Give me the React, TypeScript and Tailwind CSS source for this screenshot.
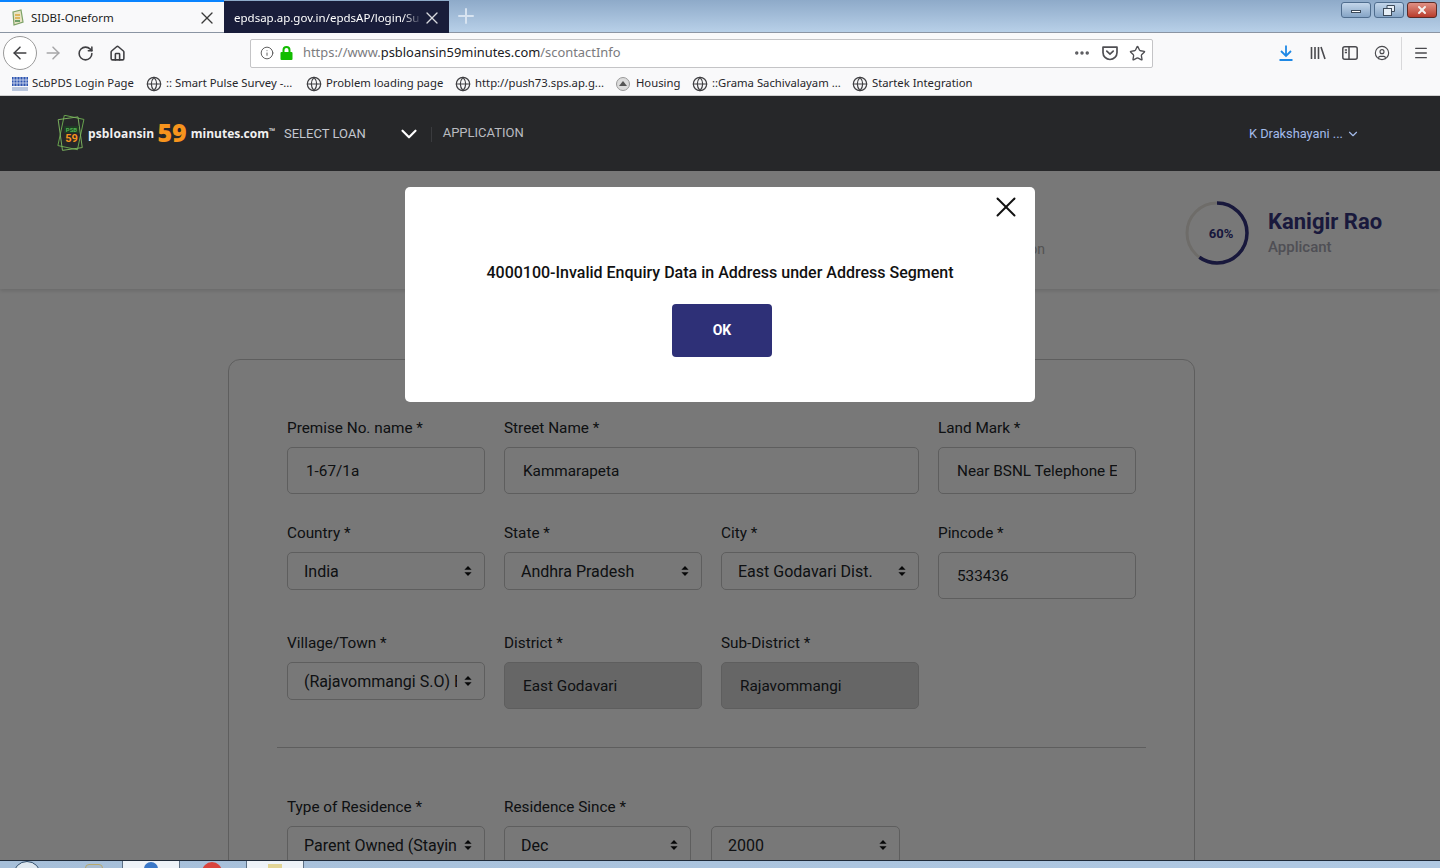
import { ArrowLeft, ArrowRight, ChevronDown, CircleUser, Ellipsis, Globe, Home, Info, Menu, Plus, RotateCw, Star, X } from "lucide-react";

const bookmarks = [
  { label: ":: Smart Pulse Survey -...", width: "w-[160px]" },
  { label: "Problem loading page", width: "w-[149px]" },
  { label: "http://push73.sps.ap.g...", width: "w-[161px]" },
];

function Caret() {
  return (
    <svg className="pointer-events-none absolute right-[13px] top-1/2 -translate-y-1/2" width="8" height="11" viewBox="0 0 8 11" aria-hidden="true">
      <path d="M4 0.5 L7.6 4.3 H0.4 Z M4 10.5 L0.4 6.7 H7.6 Z" fill="#101113" />
    </svg>
  );
}

function Label({ children }: { children: string }) {
  return <label className="mb-[9px] block h-[21px] pt-px text-[15.3px] leading-5 text-[#212529]">{children}</label>;
}

function TextField({ label, value, disabled }: { label: string; value: string; disabled?: boolean }) {
  return (
    <div>
      <Label>{label}</Label>
      <input
        readOnly
        value={value}
        className={`h-[47px] w-full rounded-[5px] border border-[#c8c8c8] px-[18px] text-[15.3px] text-[#212529] outline-none ${disabled ? "bg-[#d9d9d9]" : "bg-white"}`}
      />
    </div>
  );
}

function SelectBox({ value, className }: { value: string; className?: string }) {
  return (
    <div className={`relative ${className ?? ""}`}>
      <select
        value={value}
        onChange={() => undefined}
        className="h-[38px] w-full appearance-none rounded-[5px] border border-[#c8c8c8] bg-white pl-4 pr-[27px] pt-[2px] text-[16px] text-[#212529] outline-none"
      >
        <option>{value}</option>
      </select>
      <Caret />
    </div>
  );
}

function SelectField({ label, value }: { label: string; value: string }) {
  return (
    <div>
      <Label>{label}</Label>
      <SelectBox value={value} />
    </div>
  );
}

function BrowserTabs() {
  return (
    <div className="flex h-[33px] items-start border-b border-[#8b95a3] bg-gradient-to-b from-[#8eaac9] to-[#b8d0e8]">
      <div className="flex h-[32px] w-[224px] items-center border-t-[2px] border-[#0a84ff] bg-[#f9f9fa] pl-[10px] pr-[7px] pt-px">
        <svg width="15" height="17" viewBox="0 0 15 17" aria-hidden="true">
          <path d="M3 3 L11 1 L13 13 L4 16 Z" fill="#e8e4c4" stroke="#7da267" strokeWidth="1.2" />
          <path d="M5 6 H10 M5 9 H10" stroke="#d9a53d" strokeWidth="1.6" />
          <path d="M5 12 H10" stroke="#4d8c52" strokeWidth="1.6" />
        </svg>
        <span className="ml-[6px] flex-1 text-[11.5px] text-[#1c1c1c]">SIDBI-Oneform</span>
        <X size={20} strokeWidth={1.6} className="text-[#3a3a3a]" />
      </div>
      <div className="mt-px flex h-[32px] w-[225px] items-center bg-[#191d3a] pl-[10px] pr-[7px] pt-px text-white">
        <span className="flex-1 whitespace-nowrap text-[11.5px] [mask-image:linear-gradient(to_right,black_90%,transparent_100%)]">
          epdsap.ap.gov.in/epdsAP/login/Su
        </span>
        <X size={20} strokeWidth={1.6} className="shrink-0 text-[#d8d9de]" />
      </div>
      <Plus size={24} strokeWidth={2} className="ml-[5px] mt-[4px] text-[#d7e3f0]" />
      <div className="ml-auto mr-[3px] mt-[2px] flex gap-[3px]">
        <div className="flex h-[16px] w-[30px] items-center justify-center rounded-[3px] border border-[#4f6d8e] bg-gradient-to-b from-[#c3d6ea] to-[#86a5c6]">
          <div className="mt-[3px] h-[3px] w-[10px] border border-[#3c4a5a] bg-white" />
        </div>
        <div className="flex h-[16px] w-[30px] items-center justify-center rounded-[3px] border border-[#4f6d8e] bg-gradient-to-b from-[#c3d6ea] to-[#86a5c6]">
          <svg width="12" height="11" viewBox="0 0 12 11" aria-hidden="true">
            <path d="M4 0.5 H11.5 V6.5 H8.5 V3.5 H4 Z" fill="#e6eef6" stroke="#3c4a5a" />
            <rect x="0.5" y="3.5" width="8" height="7" fill="#e6eef6" stroke="#3c4a5a" />
          </svg>
        </div>
        <div className="flex h-[16px] w-[30px] items-center justify-center rounded-[3px] border border-[#5c2a26] bg-gradient-to-b from-[#df9084] to-[#b83b2c]">
          <X size={12} strokeWidth={4} className="text-[#f4f1ef]" />
        </div>
      </div>
    </div>
  );
}

function BrowserToolbar() {
  return (
    <div className="flex h-[38px] items-center bg-[#f9f9fa] pl-[3px] pt-[2px] text-[#3f3f42]">
      <div className="flex size-[34px] items-center justify-center rounded-full border border-[#9a9a9a] bg-white">
        <ArrowLeft size={20} strokeWidth={1.8} />
      </div>
      <ArrowRight size={20} strokeWidth={1.8} className="ml-[6px] text-[#a6a6a8]" />
      <RotateCw size={17} strokeWidth={2.2} className="ml-[14px]" />
      <Home size={17} strokeWidth={2.2} className="ml-[15px]" />
      <div className="ml-[124px] flex h-[29px] w-[903px] items-center rounded-[2px] border border-[#c4c4c6] bg-white pl-[9px] pr-[6px]">
        <Info size={14} strokeWidth={1.6} className="text-[#555]" />
        <svg className="ml-[6px]" width="13" height="14" viewBox="0 0 13 14" aria-hidden="true">
          <path d="M3.5 6 V4 A3 3 0 0 1 9.5 4 V6" fill="none" stroke="#12bc00" strokeWidth="2" />
          <rect x="0.5" y="6" width="12" height="8" rx="1" fill="#12bc00" />
        </svg>
        <span className="ml-[10px] flex-1 text-[12.9px] text-[#7b7b7e]">
          https://www.<span className="text-[#202023]">psbloansin59minutes.com</span>/scontactInfo
        </span>
        <Ellipsis size={18} strokeWidth={2.6} className="mr-px text-[#58585c]" />
        <svg className="ml-[10px]" width="16" height="15" viewBox="0 0 16 15" fill="none" stroke="#4f4f53" strokeWidth="1.7" aria-hidden="true">
          <path d="M1 1.2 H15 V6.5 A7 7 0 0 1 1 6.5 Z" strokeLinejoin="round" />
          <path d="M4.8 5.2 L8 8.2 L11.2 5.2" strokeLinecap="round" />
        </svg>
        <Star size={17} strokeWidth={1.9} className="ml-[11px] text-[#4f4f53]" />
      </div>
      <svg className="ml-[126px]" width="14" height="16" viewBox="0 0 14 16" fill="none" stroke="#1e88e5" strokeWidth="1.8" aria-hidden="true">
        <path d="M7 0.5 V10.5 M2 6 L7 11 L12 6 M0.5 15 H13.5" />
      </svg>
      <svg className="ml-[17px]" width="16" height="14" viewBox="0 0 16 14" fill="none" stroke="#4a4a4e" strokeWidth="1.6" aria-hidden="true">
        <path d="M1.5 1 V13 M5 1 V13 M8.5 1 V13 M11 1 L15 13" />
      </svg>
      <svg className="ml-[16px]" width="16" height="14" viewBox="0 0 16 14" fill="none" stroke="#4a4a4e" strokeWidth="1.5" aria-hidden="true">
        <rect x="0.8" y="0.8" width="14.4" height="12.4" rx="2" />
        <path d="M7 1 V13 M2.8 4 H5 M2.8 6.5 H5" />
      </svg>
      <CircleUser size={16} strokeWidth={1.7} className="ml-[16px] text-[#4a4a4e]" />
      <div className="ml-[11px] h-[33px] w-px bg-[#d8d8da]" />
      <Menu size={16} strokeWidth={2} className="ml-[11px] text-[#4a4a4e]" />
    </div>
  );
}

function BrowserBookmarks() {
  return (
    <div className="flex h-[25px] items-center border-b border-[#d0d0d0] bg-[#f9f9fa] pl-[12px] pt-px text-[11.3px] text-[#26262a]">
      <svg width="16" height="16" viewBox="0 0 16 16" aria-hidden="true">
        <rect y="1" width="16" height="9" fill="#2f55b0" />
        <path d="M2 1 V10 M5 1 V10 M8 1 V10 M11 1 V10 M14 1 V10 M0 4 H16 M0 7 H16" stroke="#dfe6f5" strokeWidth="0.8" />
        <rect y="11" width="16" height="4" fill="#b9c6dd" />
      </svg>
      <span className="ml-[4px] w-[114px]">ScbPDS Login Page</span>
      {bookmarks.map((b) => (
        <div key={b.label} className={`flex items-center ${b.width}`}>
          <Globe size={16} strokeWidth={1.8} className="shrink-0 text-[#3f3f42]" />
          <span className="ml-[4px] whitespace-nowrap">{b.label}</span>
        </div>
      ))}
      <div className="flex w-[76px] items-center">
        <div className="flex size-[14px] shrink-0 items-center justify-center rounded-full border border-[#9a9a9a] bg-[#dcdcdc]">
          <div className="size-0 border-x-[4px] border-b-[5px] border-x-transparent border-b-[#555]" />
        </div>
        <span className="ml-[6px]">Housing</span>
      </div>
      <div className="flex w-[160px] items-center">
        <Globe size={16} strokeWidth={1.8} className="shrink-0 text-[#3f3f42]" />
        <span className="ml-[4px] whitespace-nowrap">::Grama Sachivalayam ...</span>
      </div>
      <div className="flex items-center">
        <Globe size={16} strokeWidth={1.8} className="shrink-0 text-[#3f3f42]" />
        <span className="ml-[4px] whitespace-nowrap">Startek Integration</span>
      </div>
    </div>
  );
}

function AppHeader() {
  return (
    <header className="relative z-10 flex h-[75px] shrink-0 items-center bg-[#262729] pl-[56px] pt-px font-['Roboto',sans-serif]">
      <svg width="30" height="36" viewBox="0 0 30 36" className="-mt-[2px]" aria-hidden="true">
        <rect x="5" y="2" width="20" height="31" fill="none" stroke="#6aa84f" strokeWidth="0.9" transform="rotate(12 15 17)" />
        <rect x="4" y="3" width="20" height="31" fill="none" stroke="#7db35f" strokeWidth="0.9" transform="rotate(-8 15 17)" />
        <rect x="8" y="11" width="15" height="7" fill="#1f3b24" />
        <text x="15.5" y="17" textAnchor="middle" fontSize="6" fontWeight="700" fill="#4fb34f">PSB</text>
        <text x="15.5" y="27" textAnchor="middle" fontSize="11" fontWeight="700" fill="#f7941d">59</text>
      </svg>
      <div className="ml-[2px] flex w-[196px] items-center whitespace-nowrap font-['Open_Sans',sans-serif] font-bold text-[#f1f1f1]">
        <span className="text-[12px] tracking-[0.15px]">psbloansin</span>
        <span className="ml-[3px] -mt-[3px] text-[25px] font-extrabold leading-none text-[#f7941d]">59</span>
        <span className="ml-[4px] text-[12px]">minutes.com</span>
        <span className="-mt-[6px] text-[8px]">™</span>
      </div>
      <span className="text-[13px] text-[#c4c7cf]">SELECT LOAN</span>
      <ChevronDown size={26} strokeWidth={2} className="ml-[30px] text-white" />
      <div className="ml-[9px] h-[15px] w-px bg-[#3a3b3e]" />
      <span className="-mt-[2px] ml-[11px] text-[13px] text-[#b9bbc0]">APPLICATION</span>
      <span className="ml-auto text-[12.8px] text-[#a3bbea]">K Drakshayani ...</span>
      <ChevronDown size={14} strokeWidth={2} className="ml-[3px] mr-[80px] text-[#a3bbea]" />
    </header>
  );
}

function ProfileBar() {
  return (
    <div className="flex h-[118px] items-center bg-white pr-[58px] pt-[5px] shadow-[0_2px_4px_rgba(0,0,0,0.12)]">
      <span className="ml-auto mt-[33px] text-[14px] text-[#b0b0b0]">Application</span>
      <div className="relative ml-[140px] size-[64px]">
        <svg width="64" height="64" viewBox="0 0 64 64" aria-hidden="true">
          <circle cx="32" cy="32" r="30" fill="none" stroke="#e9e6df" strokeWidth="3" />
          <circle cx="32" cy="32" r="30" fill="none" stroke="#33337f" strokeWidth="3.5" pathLength="100" strokeDasharray="60 40" transform="rotate(-90 32 32)" />
        </svg>
        <span className="absolute inset-0 flex items-center justify-center pl-[8px] pt-[3px] text-[13px] font-bold text-[#33337f]">60%</span>
      </div>
      <div className="ml-[19px] w-[114px]">
        <div className="whitespace-nowrap text-[22px] font-bold leading-[28px] text-[#36367f]">Kanigir Rao</div>
        <div className="mt-[1px] text-[15px] font-medium leading-5 text-[#a8a8b4]">Applicant</div>
      </div>
    </div>
  );
}

function AddressForm() {
  return (
    <div className="ml-[228px] mt-[70px] h-[640px] w-[967px] rounded-[12px] border border-[#c8c8c8] pl-[58px] pt-[57px]">
      <div className="mb-[28px] grid w-[849px] grid-cols-4 gap-x-[19px]">
        <TextField label="Premise No. name *" value="1-67/1a" />
        <div className="col-span-2">
          <TextField label="Street Name *" value="Kammarapeta" />
        </div>
        <TextField label="Land Mark *" value="Near BSNL Telephone Exchange" />
      </div>
      <div className="mb-[33px] grid w-[849px] grid-cols-4 items-start gap-x-[19px]">
        <SelectField label="Country *" value="India" />
        <SelectField label="State *" value="Andhra Pradesh" />
        <SelectField label="City *" value="East Godavari Dist." />
        <TextField label="Pincode *" value="533436" />
      </div>
      <div className="grid w-[849px] grid-cols-4 items-start gap-x-[19px]">
        <SelectField label="Village/Town *" value="(Rajavommangi S.O) East" />
        <TextField label="District *" value="East Godavari" disabled />
        <TextField label="Sub-District *" value="Rajavommangi" disabled />
      </div>
      <hr className="-ml-[10px] mb-[48px] mt-[38px] w-[869px] border-[#c8c8c8]" />
      <div className="flex">
        <div className="w-[198px]">
          <SelectField label="Type of Residence *" value="Parent Owned (Staying with parents)" />
        </div>
        <div className="ml-[19px] w-[187px]">
          <SelectField label="Residence Since *" value="Dec" />
        </div>
        <div className="ml-[20px] w-[189px] pt-[30px]">
          <SelectBox value="2000" />
        </div>
      </div>
    </div>
  );
}

function ErrorModal() {
  return (
    <>
      <div className="absolute inset-0 bg-black/[0.53]" />
      <div className="absolute left-[405px] top-[16px] h-[215px] w-[630px] rounded-[5px] bg-white pt-[3px]">
        <div className="flex justify-end pr-[12px]">
          <X size={34} strokeWidth={1.4} className="text-[#111]" />
        </div>
        <p className="mt-[39px] text-center text-[16px] font-medium leading-5 text-[#111]">
          4000100-Invalid Enquiry Data in Address under Address Segment
        </p>
        <div className="mt-[21px] flex justify-center pl-[4px]">
          <button className="h-[53px] w-[100px] rounded-[4px] bg-[#2e3077] text-[14px] font-bold text-white">OK</button>
        </div>
      </div>
    </>
  );
}

function Taskbar() {
  return (
    <div className="flex h-[8px] shrink-0 overflow-hidden border-t border-[#1f2a38] bg-gradient-to-r from-[#a6bfd9] to-[#b0c9e3]">
      <div className="ml-[13px] size-[28px] shrink-0 rounded-full border border-[#2d4a68] bg-[#dfe8f0]" />
      <div className="ml-[44px] mt-[3px] size-[18px] shrink-0 rounded-[4px] border border-[#b9a96a] bg-[#a8bcd0]" />
      <div className="ml-[19px] flex h-[10px] w-[58px] shrink-0 justify-center border-x border-[#5c6f84] bg-[#eef3f8]">
        <div className="mt-[1px] h-[8px] w-[14px] rounded-t-full bg-[#3b78c8]" />
      </div>
      <div className="ml-[22px] mt-[1px] size-[20px] shrink-0 rounded-full bg-[#d9443c]" />
      <div className="ml-[24px] flex h-[10px] w-[58px] shrink-0 justify-center border-x border-[#5c6f84] bg-[#eef3f8]">
        <div className="mt-[3px] h-[8px] w-[14px] bg-[#e2d596]" />
      </div>
    </div>
  );
}

export default function App() {
  return (
    <div className="flex h-[868px] w-[1440px] flex-col overflow-hidden bg-white font-['Roboto',sans-serif]">
      <div className="shrink-0 font-['Noto_Sans',sans-serif]">
        <BrowserTabs />
        <BrowserToolbar />
        <BrowserBookmarks />
      </div>
      <AppHeader />
      <main className="relative min-h-0 flex-1 overflow-hidden">
        <ProfileBar />
        <AddressForm />
        <ErrorModal />
      </main>
      <Taskbar />
    </div>
  );
}
